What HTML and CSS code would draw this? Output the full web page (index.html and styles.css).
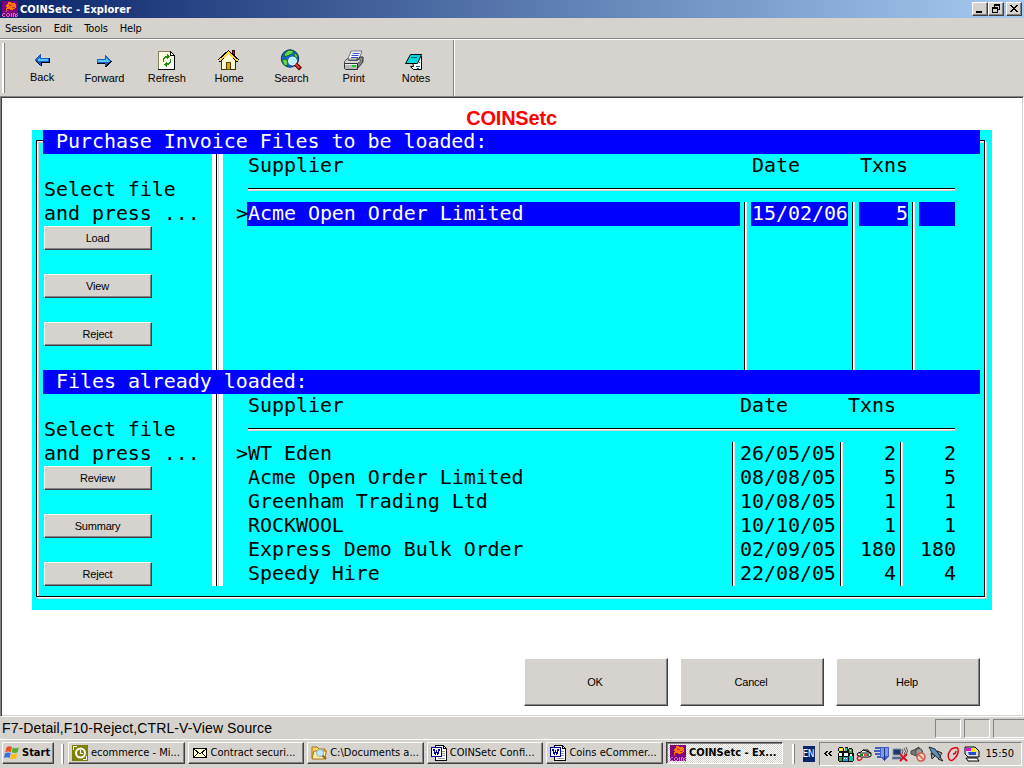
FILE: index.html
```html
<!DOCTYPE html>
<html lang="en">
<head>
<meta charset="utf-8">
<title>COINSetc - Explorer</title>
<link rel="stylesheet" href="styles.css">
</head>
<body>
<svg class="defs" width="0" height="0">
  <defs>
    <symbol id="coins" viewBox="0 0 16 16">
      <path fill="#800080" d="M0 0h16v16H0z"/>
      <path fill="#ff7800" d="M6 1h3v1h4v1h1v4h-1v1h-2v1H8V8H5v1H4V7h1V6H4V4h1V3h1z"/>
      <path fill="#c03838" d="M7 4h3v1H7zM10 6h3v1h-3zM5 9h1v1H5v1H3v-1h1V9zM7 3h1v1H7z"/>
      <path fill="#c878c8" d="M1 12h2v1H1zM0 13h1v2H0zM1 15h2v1H1zM5 12h2v1H5zM4 13h1v2H4zM7 13h1v2H7zM5 15h2v1H5zM9 12h1v4H9zM11 12h1v4h-1zM12 12h1v1h-1zM13 13h1v3h-1zM15 12h1v1h-1zM14 13h1v1h-1zM15 14h1v1h-1zM14 15h1v1h-1z"/>
    </symbol>
    <symbol id="word" viewBox="0 0 16 16">
      <path fill="#fff" stroke="#000" d="M4.500 .5h8l3 3v12h-11z"/>
      <path fill="none" stroke="#000" d="M12.500 .5v3h3"/>
      <path fill="none" stroke="#999" d="M11 6.500h3M11 8.500h3M11 10.500h3M7 13.500h7"/>
      <path fill="#fff" stroke="#0000a0" d="M.5 2.500h10v9H.5z"/>
      <path fill="#0000a0" d="M2 4h2v3h1V5h1v2h1V4h2v2H8v3H7v1H6V8H5v2H4V9H3V6H2z"/>
    </symbol>
  </defs>
</svg>
<div class="window">
  <header class="titlebar">
    <svg class="px" width="16" height="16"><use href="#coins"/></svg>
    <span class="titlebar-text">COINSetc - Explorer</span>
    <span class="winbtn"><svg class="px" width="12" height="10"><path d="M2 8h6v2H2z"/></svg></span>
    <span class="winbtn"><svg class="px" width="12" height="10"><path d="M4 1h6v6H8V6h1V3H5v1H4zM2 4h6v6H2zM3 6v3h4V6z" fill-rule="evenodd"/></svg></span>
    <span class="winbtn close"><svg class="px" width="12" height="10"><path d="M2 2h2v1h1v1h2V3h1V2h2v1H9v1H8v1H7v1h1v1h1v1h1v1H8V8H7V7H5v1H4v1H2V8h1V7h1V6h1V5H4V4H3V3H2z"/></svg></span>
  </header>
  <nav class="menubar"><span>Session</span><span>Edit</span><span>Tools</span><span>Help</span></nav>
  <div class="toolbar">
    <i class="grip"></i>
    <div class="tools">
      <div class="tool"><svg class="px" width="22" height="22"><path fill="#1a5fc8" d="M3 11h1v-1h1V9h1V8h1V7h1V6h1v-1h1v4h8v5h-8v3H9v-1H8v-1H7v-1H6v-1H5v-1H4z"/><path fill="#50c8ff" d="M6 11h1v-1h1V9h1v1h8v2H7v-1z"/><path fill="#000" d="M10 13h8V9h1v5h-8v3h-1zM5 12h1v1h1v1h1v1h1v1H8v-1H7v-1H6v-1H5z"/></svg><span>Back</span></div>
      <div class="tool"><svg class="px" width="22" height="22"><path fill="#1a5fc8" d="M19 12h-1v-1h-1v-1h-1V9h-1V8h-1V7h-1V6h-1v4H4v4h8v3h1v-1h1v-1h1v-1h1v-1h1v-1h1z"/><path fill="#50c8ff" d="M5 11h8v-2h1v1h1v1h1v1h1v1H5z"/><path fill="#000" d="M4 14h8v3h1v-1h1v-1h1v-1h1v-1h1v-1h2v1h-1v1h-1v1h-1v1h-1v1h-1v1h-2v-3H4z"/></svg><span>Forward</span></div>
      <div class="tool"><svg width="22" height="22" class="px"><path fill="#fffee0" stroke="#808060" d="M2.500 2.500h12l4 4v14h-16z"/><path fill="#fff" stroke="#000" d="M14.500 2.500v4h4zM18.500 6v14.500H2"/><path fill="#209010" d="M7 9h1V8h1V7h2V5h1v1h1v1h1v1h-1v1h-1v1h-1V9H9v1H8v3H7zM14 10h1v4h-1v1h-1v1h-2v2h-1v-1H9v-1H8v-1h1v-1h1v-1h1v1h2v-1h1z"/></svg><span>Refresh</span></div>
      <div class="tool"><svg class="px" width="22" height="22"><path fill="#c01020" stroke="#400" d="M14.500 1.500h2v7h-2z"/><path fill="#fffbd0" stroke="#403000" d="M3.500 10.500L10.500 4.500 17.500 10.500v10h-14z"/><path fill="none" stroke="#000" stroke-width="3.400" d="M1 12L10.500 3 20 12"/><path fill="none" stroke="#ffd040" stroke-width="2" d="M1.500 11.800L10.500 3.500 19.500 11.800"/><path fill="#e0a020" stroke="#604000" d="M8.500 13.500h4v7h-4z"/></svg><span>Home</span></div>
      <div class="tool"><svg width="22" height="22"><circle cx="10" cy="9.500" r="8.700" fill="#1464dc" stroke="#003070"/><path fill="#70d050" stroke="#107020" d="M5 4l4-3 5 1-2 3-5 2-3 1zM2 11l4-1 2 3-1 4-3-1zM16 4l2 4-2 1-2-3z"/><circle cx="12.500" cy="12" r="4" fill="#b8f0ff" stroke="#e8ffff"/><path stroke="#500" stroke-width="4" d="M15.500 15l5 5"/><path stroke="#f04020" stroke-width="2" d="M15.500 15l4 4"/></svg><span>Search</span></div>
      <div class="tool"><svg width="22" height="22"><path fill="#fff" stroke="#707088" d="M5 10L8 2h11l-3 8z"/><path stroke="#3050d0" stroke-width="1.200" d="M9.500 4.500h7M8.500 6.500h7M8 8.500h7"/><path fill="#888" stroke="#303030" d="M14 20l6-7V8h-3l-5 4z"/><path fill="#d8d8d8" stroke="#505050" d="M1.500 12.500l3-3 1 2h9l2-2 1 3-3 2h-13z"/><path fill="#b8b8b8" stroke="#303030" d="M1.500 14.500h13v6h-12l-1-1z"/><path fill="#10d020" d="M9 16h4v2H9z"/><path stroke="#eee" d="M2 15.500h12"/></svg><span>Print</span></div>
      <div class="tool"><svg width="22" height="22"><path fill="#fff" stroke="#000" d="M6.500 7.500h10v13h-8l-3-3h3z"/><path fill="#00d8e0" stroke="#000" d="M5.500 5.500h11l-4 9h-12z"/><path stroke="#006080" d="M6 8.500h6M11 17.500h4M14 13.500h1M12 19.500h2"/></svg><span>Notes</span></div>
    </div>
    <i class="toolbar-end"></i>
  </div>
  <main class="client">
    <h1>COINSetc</h1>
    <section class="terminal">
      <div class="panel">
        <h2>Purchase Invoice Files to be loaded:</h2>
        <div class="panel-body">
          <div class="side">
            <p>Select file<br>and press ...</p>
            <button>Load</button><button>View</button><button>Reject</button>
          </div>
          <i class="divider"></i>
          <div class="list first">
            <div class="row head"><span>Supplier</span><span>Date</span><span>Txns</span></div>
            <i class="hr"></i>
            <div class="row selected"><b>&gt;</b><div class="name"><span>Acme Open Order Limited</span></div><div class="cell"><span>15/02/06</span></div><div class="cell num"><span>5</span></div><div class="cell num last"><span></span></div></div>
            <div class="row filler"><b></b><div class="name"></div><div class="cell"></div><div class="cell"></div><div class="cell"></div></div>
          </div>
        </div>
      </div>
      <div class="panel">
        <h2>Files already loaded:</h2>
        <div class="panel-body">
          <div class="side">
            <p>Select file<br>and press ...</p>
            <button>Review</button><button>Summary</button><button>Reject</button>
          </div>
          <i class="divider"></i>
          <div class="list second">
            <div class="row head"><span>Supplier</span><span>Date</span><span>Txns</span></div>
            <i class="hr"></i>
            <div class="row"><b>&gt;</b><div class="name"><span>WT Eden</span></div><div class="cell"><span>26/05/05</span></div><div class="cell num"><span>2</span></div><div class="cell num"><span>2</span></div></div>
            <div class="row"><b></b><div class="name"><span>Acme Open Order Limited</span></div><div class="cell"><span>08/08/05</span></div><div class="cell num"><span>5</span></div><div class="cell num"><span>5</span></div></div>
            <div class="row"><b></b><div class="name"><span>Greenham Trading Ltd</span></div><div class="cell"><span>10/08/05</span></div><div class="cell num"><span>1</span></div><div class="cell num"><span>1</span></div></div>
            <div class="row"><b></b><div class="name"><span>ROCKWOOL</span></div><div class="cell"><span>10/10/05</span></div><div class="cell num"><span>1</span></div><div class="cell num"><span>1</span></div></div>
            <div class="row"><b></b><div class="name"><span>Express Demo Bulk Order</span></div><div class="cell"><span>02/09/05</span></div><div class="cell num"><span>180</span></div><div class="cell num"><span>180</span></div></div>
            <div class="row"><b></b><div class="name"><span>Speedy Hire</span></div><div class="cell"><span>22/08/05</span></div><div class="cell num"><span>4</span></div><div class="cell num"><span>4</span></div></div>
          </div>
        </div>
      </div>
    </section>
    <div class="actions"><button>OK</button><button>Cancel</button><button>Help</button></div>
  </main>
  <div class="statusbar"><span class="status-text">F7-Detail,F10-Reject,CTRL-V-View Source</span><i></i><i></i><i></i></div>
  <footer class="taskbar">
    <div class="start"><svg width="16" height="16"><path fill="#e85020" d="M2.500 2.500Q5 .5 8 2L6.800 7Q4 5.800 1.200 7.300z"/><path fill="#50b030" d="M8.800 2.500q3 1.500 6.200-.2l-1.400 5q-3 1.500-6 0z"/><path fill="#3070e0" d="M1 8.200q3-1.500 5.700-.2l-1.300 5Q3 11.500 0 13z"/><path fill="#f8c010" d="M7.400 8.400q3 1.400 6 0l-1.400 5q-3 1.500-5.900-.2z"/></svg><span>Start</span></div>
    <i class="grip task-grip"></i>
    <div class="tasks">
      <div class="task"><svg width="16" height="16"><path fill="#808000" d="M0 0h16v16H0z"/><circle cx="8.500" cy="8" r="4.500" fill="none" stroke="#fff" stroke-width="2"/><path fill="none" stroke="#fff" d="M8.500 5v3.500H11M1.500 5V1.500H5M14.500 11v3.500H11"/></svg><span>ecommerce - Mi...</span></div>
      <div class="task"><svg class="px" width="16" height="16"><path fill="#ffffc8" stroke="#000" d="M1.500 3.500h13v9h-13z"/><path fill="none" stroke="#000" d="M2 4l6 5 6-5M2 12l4-4M14 12l-4-4"/></svg><span>Contract securi...</span></div>
      <div class="task"><svg width="16" height="16"><path fill="#ffd860" stroke="#a87010" d="M1 13V2h5l2 2h6v9z"/><path fill="#fff0a0" stroke="#a87010" d="M1 14l2-8h12.500l-2 8z"/><circle cx="9" cy="8" r="3.500" fill="#c0e8ff" stroke="#90b0c8"/><path stroke="#a06020" stroke-width="2" d="M11.500 10.500L15 14"/></svg><span>C:\Documents a...</span></div>
      <div class="task"><svg class="px" width="16" height="16"><use href="#word"/></svg><span>COINSetc Confi...</span></div>
      <div class="task"><svg class="px" width="16" height="16"><use href="#word"/></svg><span>Coins eCommer...</span></div>
      <div class="task active"><svg class="px" width="16" height="16"><use href="#coins"/></svg><span>COINSetc - Ex...</span></div>
    </div>
    <i class="grip lang-grip"></i>
    <span class="lang">EN</span>
    <div class="tray">
      <svg class="px chev" width="9" height="6"><path d="M2 0h2v1H3v1H2v1h1v1h1v1H2V4H1V3H0V2h1V1h1zM6 0h2v1H7v1H6v1h1v1h1v1H6V4H5V3H4V2h1V1h1z"/></svg>
      <svg class="px" width="16" height="16"><path fill="#111" d="M1 1h4v1h1v3h1V1h3v2h1V2h3v1h1v4h1v8h-1v1H1v-1H0V7h1V5H0V2h1z"/><path fill="#ffe020" d="M1 2h4v3H1z"/><path fill="#fff" d="M2 3h1v1H2zM1 7h3v3H1z"/><path fill="#20c0a0" d="M7 2h2v3H7zM11 10h4v5h-4z"/><path fill="#fff" d="M6 7h4v3H6z"/><path fill="#28b030" d="M11 3h3v4h-3zM1 11h3v4H1z"/><path fill="#20a0e0" d="M5 11h5v4H5z"/><path fill="#fff" d="M6 12h1v1H6zM8 12h1v1H8zM12 4h1v1h-1zM12 8h2v2h-2z"/></svg>
      <svg width="16" height="16"><path fill="#fff" stroke="#000" d="M1 9l1-2 3-1 2-2h5l1 2 2 1v3l-2 1H5z"/><path fill="none" stroke="#000" d="M3 7h12M7 4l6 2"/><path stroke="#109020" stroke-width="1.800" d="M4 9h3M11 9h2"/><path fill="none" stroke="#e01020" stroke-width="1.400" d="M8 9h3M4 10q-4 1-2 4 3 1 4-2"/></svg>
      <svg class="px" width="16" height="16"><path fill="#4060c0" d="M1 1h5v2H1zM0 4h6v2H0zM1 7h5v2H1zM3 10h4v2H3zM6 1h9v9l-4 5-5-4z"/><path fill="#8098e0" d="M7 2h3v9H7zM11 2h3v8h-3z"/><path fill="#203890" d="M10 2h1v12h-1z"/></svg>
      <svg width="16" height="16"><path fill="#203868" stroke="#8098b0" d="M1 3h8v6H1zM0 11h9l1 2H0z"/><path fill="none" stroke="#555" d="M10 3q2 2 0 5M12 2q3 3 0 7M14 1q3 4 0 8"/><path stroke="#d81020" stroke-width="2" d="M8 8l7 7M15 8l-7 7"/></svg>
      <svg width="16" height="16"><path fill="#777" stroke="#444" d="M1 5l3-1 5-3v10L4 9 1 8z"/><circle cx="9" cy="6" r="3.500" fill="#999" stroke="#444"/><circle cx="11" cy="11" r="4" fill="#f4d0c8" stroke="#c86050" stroke-width="1.600"/><path stroke="#c86050" stroke-width="1.500" d="M8 8l6 6"/></svg>
      <svg width="16" height="16"><path fill="#6090b8" stroke="#203040" d="M1 1l6 2 6 8-2 2-7-6z"/><path fill="#a0a8b0" stroke="#222" d="M3 7l1 6 3-3zM9 5l5 2-2 3zM12 11l3 4-5-2z"/></svg>
      <svg width="16" height="16"><path fill="none" stroke="#e00010" stroke-width="1.400" d="M7 8q3 0 3-3M12 2Q6 1 4 5 1 9 3 13q2 3 5 0 5-4 4-11"/></svg>
      <svg width="16" height="16"><path fill="#ddd" stroke="#000" d="M1 1h10l4 4v6H4L1 8z"/><path fill="#e010d0" d="M2 2h5v3H2z"/><path fill="#ffe010" d="M7 2h4l2 4H7z"/><path fill="#2050d0" d="M4 6h8v3H5z"/><path fill="#fff" stroke="#000" d="M2 12h11l2 3H4z"/></svg>
      <time>15:50</time>
    </div>
  </footer>
</div>
</body>
</html>
```
FILE: styles.css
```css
*, *::before { box-sizing: border-box; }
body { margin: 0; overflow: hidden; background: #d6d3ce; color: #000; }
.defs { position: absolute; }
svg { display: block; flex: none; }
.px { shape-rendering: crispEdges; }
i { display: block; flex: none; }
button { display: block; padding: 0 1px 0 0; font: 11px "Liberation Sans", Arial, sans-serif; letter-spacing: -0.2px; color: #000; background: #d6d3ce; border-radius: 0; }

.window { width: 1024px; height: 768px; display: flex; flex-direction: column; font: 11px "DejaVu Sans Condensed", "Noto Sans", sans-serif; }

.titlebar { height: 18px; flex: none; display: flex; align-items: center; padding: 0 2px; background: linear-gradient(90deg, #0a246a, #a6caf0); }
.titlebar-text { flex: 1; margin-left: 2px; color: #fff; font-weight: bold; letter-spacing: 0.05px; white-space: nowrap; }
.winbtn { width: 16px; height: 14px; padding: 0 1px; background: #d6d3ce; border: 1px solid; border-color: #fff #404040 #404040 #fff; box-shadow: inset -1px -1px #848284; }
.winbtn.close { margin-left: 2px; }

.menubar { height: 22px; flex: none; display: flex; gap: 12px; padding: 3px 0 0 5px; border-bottom: 1px solid #fff; box-shadow: inset 0 -1px #848284; line-height: 15px; letter-spacing: -0.15px; }

.toolbar { height: 56px; flex: none; display: flex; }
.grip { width: 3px; border-left: 2px solid #fff; border-right: 1px solid #848284; }
.toolbar > .grip { height: 50px; margin: 3px 6px 0 2px; }
.tools { display: flex; width: 442px; }
.tool { width: 62.3px; display: flex; flex-direction: column; align-items: center; padding-top: 9px; font: 11px/14px "Liberation Sans", Arial, sans-serif; letter-spacing: -0.1px; }
.tool:first-child span { margin-top: -1px; }
.toolbar-end { width: 2px; border-left: 1px solid #848284; border-right: 1px solid #fff; }

.client { height: 621px; flex: none; background: #fff; border: 1px solid; border-color: #848284 #fff #fff #848284; box-shadow: inset 1px 1px #404040, inset -1px -1px #d6d3ce; padding: 1px; display: flex; flex-direction: column; }
.client h1 { margin: 8px 0 0; padding-right: 1px; height: 24px; line-height: 24px; text-align: center; font-family: "Liberation Sans", Arial, sans-serif; font-size: 20px; color: #f00; letter-spacing: -0.2px; }

.terminal { width: 960px; height: 480px; flex: none; margin-left: 30px; background: #0ff; position: relative; font: 20px/24px "DejaVu Sans Mono", monospace; letter-spacing: -0.06px; white-space: nowrap; }
.terminal::before { content: ""; position: absolute; left: 4px; top: 10px; width: 949px; height: 457px; border: 1px solid #000; box-shadow: 1px 1px #fff, 2px 2px #d6d3ce, inset 1px 1px #fff, inset 2px 2px #d6d3ce; }
.panel { position: relative; height: 240px; }
.panel h2 { margin: 0 12px 0 11px; padding-left: 13px; height: 24px; background: #00f; color: #fff; font: inherit; line-height: 22px; }
.panel-body { display: flex; height: 216px; }
.panel:last-child .panel-body { height: 192px; }
.side { width: 180px; padding: 23px 0 0 12px; }
.side p { margin: 0 0 1px; height: 48px; }
.side button { width: 108px; height: 24px; margin-bottom: 24px; border: 1px solid; border-color: #fff #404040 #404040 #fff; box-shadow: inset -1px -1px #848284; }
.divider { width: 11px; background: linear-gradient(90deg, #fff 4px, #000 4px 5px, #fff 5px 6px, #d6d3ce 6px 7px, #fff 7px); }
.list { padding-left: 13px; line-height: 22px; }
.first { --name: 508px; }
.second { --name: 496px; }
.row { display: grid; height: 24px; grid-template-columns: 11px calc(var(--name) - 11px) 108px 60px 44px; }
.row.head { grid-template-columns: calc(var(--name) - 4px) 108px 60px; padding-left: 12px; }
.hr { width: 707px; height: 3px; margin: 10px 0 11px 12px; border-top: 1px solid #000; background: #fff; box-shadow: inset 0 -1px #d6d3ce; }
.row b { font-weight: normal; }
.row span { display: block; }
.name span { width: 493px; padding-left: 1px; height: 24px; }
.second .name span { width: auto; }
.cell { border-left: 1px solid #000; box-shadow: inset 1px 0 #fff, inset 2px 0 #e6e4e0; padding-left: 6px; }
.cell span { width: 97px; height: 24px; padding-left: 1px; }
.cell.num span { width: 49px; text-align: right; }
.cell.last span { width: 36px; }
.selected span { background: #00f; color: #fff; }
.row.filler { height: 144px; }

.actions { display: flex; gap: 12px; margin: 48px 0 0 522px; }
.actions button { width: 144px; height: 48px; padding-right: 2px; border: 1px solid; border-color: #fff #404040 #404040 #fff; box-shadow: inset -1px -1px #848284; }

.statusbar { height: 22px; flex: none; display: flex; gap: 3px; padding: 2px 0 1px 2px; }
.status-text { flex: 1; font: 14px/18px "Liberation Sans", Arial, sans-serif; letter-spacing: 0.11px; }
.statusbar i { width: 26px; height: 19px; border: 1px solid; border-color: #848284 #fff #fff #848284; }
.statusbar i:last-child { width: 31px; border-right: 0; }

.taskbar { height: 29px; flex: none; display: flex; border-top: 1px solid #fff; padding: 2px; line-height: 18px; white-space: nowrap; }
.start, .task { height: 22px; display: flex; align-items: center; background: #d6d3ce; border: 1px solid; border-color: #fff #404040 #404040 #fff; box-shadow: inset -1px -1px #848284; }
.start { width: 52px; padding-left: 1px; gap: 2px; font-weight: bold; }
.task-grip, .lang-grip { height: 20px; margin-top: 2px; }
.task-grip { margin-left: 7px; margin-right: 4px; }
.tasks { display: flex; gap: 3px; }
.task { width: 116.600px; padding-left: 3px; gap: 3px; }
.task.active { font-weight: bold; border-color: #404040 #fff #fff #404040; box-shadow: inset 1px 1px #848284; background: repeating-conic-gradient(#fff 0 25%, #d6d3ce 0 50%) 0 0 / 2px 2px; }
.lang-grip { margin-left: 9px; margin-right: 8px; }
.lang { width: 12px; height: 16px; margin-top: 4px; overflow: hidden; background: #0a246a; color: #fff; font-size: 10px; line-height: 16px; letter-spacing: -0.6px; }
.tray { margin-left: 4px; flex: 1; height: 24px; display: flex; align-items: center; gap: 2px; border: 1px solid; border-color: #848284 #fff #fff #848284; padding-left: 4px; }
.chev { margin-right: 3px; }
.tray time { margin-left: 4px; }
```
